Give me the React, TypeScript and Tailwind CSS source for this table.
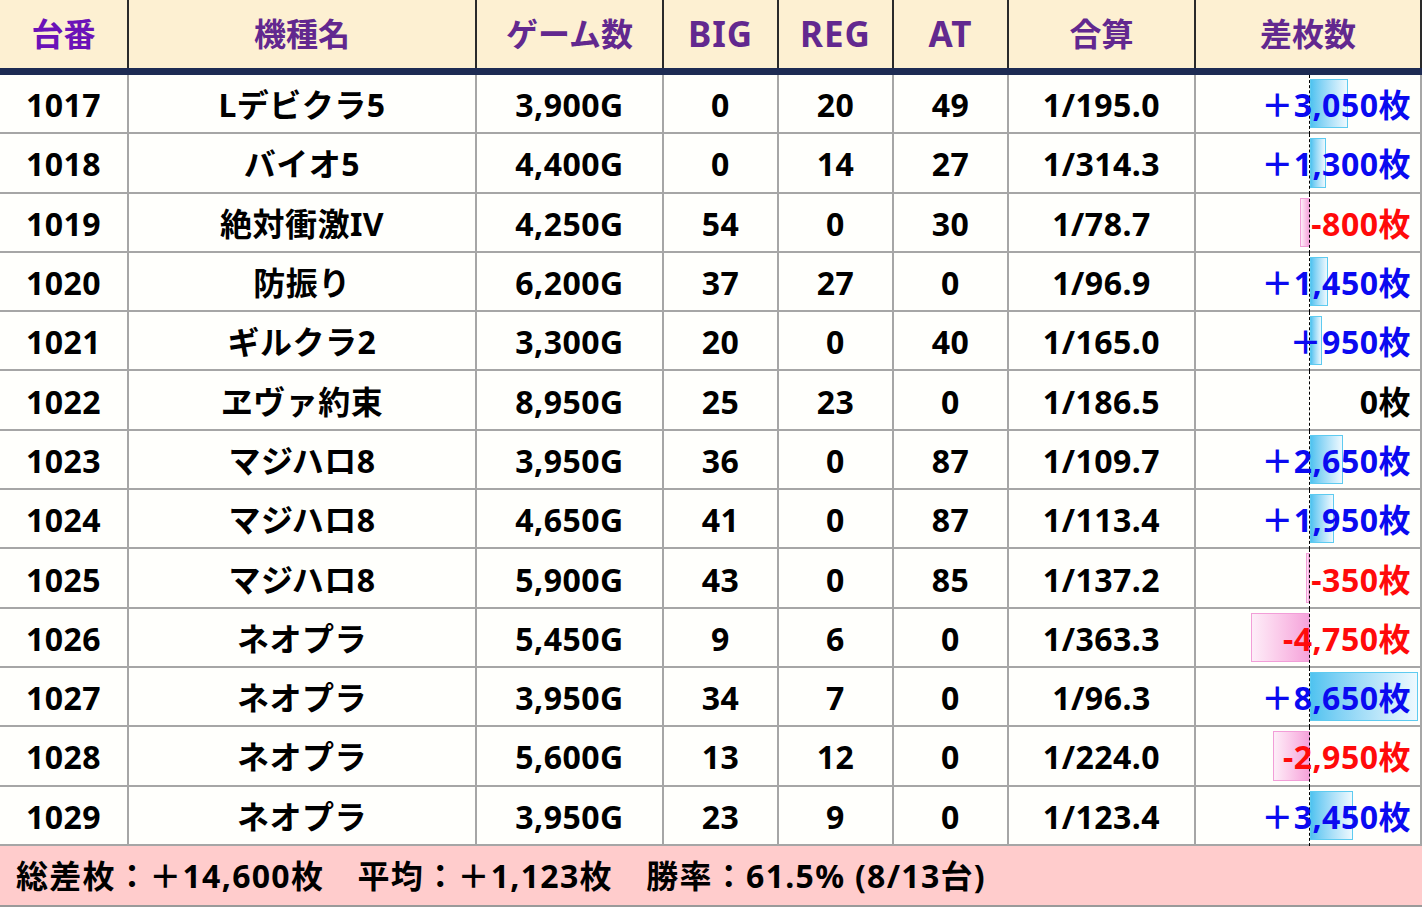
import React from "react";

type Row = [string, string, string, number, number, number, string, number];

const rows: Row[] = [
  ["1017", "Lデビクラ5", "3,900G", 0, 20, 49, "1/195.0", 3050],
  ["1018", "バイオ5", "4,400G", 0, 14, 27, "1/314.3", 1300],
  ["1019", "絶対衝激IV", "4,250G", 54, 0, 30, "1/78.7", -800],
  ["1020", "防振り", "6,200G", 37, 27, 0, "1/96.9", 1450],
  ["1021", "ギルクラ2", "3,300G", 20, 0, 40, "1/165.0", 950],
  ["1022", "ヱヴァ約束", "8,950G", 25, 23, 0, "1/186.5", 0],
  ["1023", "マジハロ8", "3,950G", 36, 0, 87, "1/109.7", 2650],
  ["1024", "マジハロ8", "4,650G", 41, 0, 87, "1/113.4", 1950],
  ["1025", "マジハロ8", "5,900G", 43, 0, 85, "1/137.2", -350],
  ["1026", "ネオプラ", "5,450G", 9, 6, 0, "1/363.3", -4750],
  ["1027", "ネオプラ", "3,950G", 34, 7, 0, "1/96.3", 8650],
  ["1028", "ネオプラ", "5,600G", 13, 12, 0, "1/224.0", -2950],
  ["1029", "ネオプラ", "3,950G", 23, 9, 0, "1/123.4", 3450],
];

const headers = ["台番", "機種名", "ゲーム数", "BIG", "REG", "AT", "合算", "差枚数"];
const maxAbs = 8650;

const cols = "grid grid-cols-[129px_348px_187px_115px_115px_115px_187px_226px]";

const formatDiff = (v: number) => {
  if (v > 0) return "＋" + v.toLocaleString("en-US") + "枚";
  if (v < 0) return "-" + Math.abs(v).toLocaleString("en-US") + "枚";
  return "0枚";
};

const DiffCell = ({ value }: { value: number }) => {
  const w = (Math.abs(value) / maxAbs) * 108;
  return (
    <div className="relative flex items-center justify-end pr-[9px] pt-[3px] border-r-2 border-b-2 border-[#a6a6a6]">
      {value > 0 && (
        <div
          className="absolute left-[114px] top-[4px] bottom-[4px] border border-[#5ecbf0] bg-linear-to-r from-[#4fc3f0] to-[#eef9fe]"
          style={{ width: w }}
        />
      )}
      {value < 0 && (
        <div
          className="absolute top-[4px] bottom-[4px] border border-[#f29ed8] bg-linear-to-r from-[#fdeef8] to-[#f5a2da]"
          style={{ width: w, left: 114 - w }}
        />
      )}
      <div className="absolute left-[113px] top-0 bottom-[-2px] border-l border-dashed border-black" />
      <span
        className={
          "relative tracking-[0.5px] " +
          (value > 0 ? "text-[#0a0af0]" : value < 0 ? "text-[#ff0a0a]" : "text-black")
        }
      >
        {formatDiff(value)}
      </span>
    </div>
  );
};

export default function App() {
  return (
    <div className="w-[1422px] h-[907px] overflow-hidden bg-white font-['Noto_Sans','Noto_Sans_CJK_JP',sans-serif] font-bold">
      <div className={cols + " h-[75px] bg-[#fdf0d2] border-b-[7px] border-[#1d2b53]"}>
        {headers.map((h, i) => (
          <div
            key={h}
            className={
              "flex items-center justify-center text-[32px] border-r-2 border-[#2a2a2a] " +
              (i === 0 ? "text-[#6b12b8]" : "text-[#62288f]") +
              (i >= 3 && i <= 5 ? " text-[35px] tracking-[1px]" : "")
            }
          >
            {h}
          </div>
        ))}
      </div>

      {rows.map((r) => (
        <div key={r[0]} className={cols + " h-[59.3px] bg-[#fffffc] text-[32px] text-black"}>
          {[r[0], r[1], r[2], r[3], r[4], r[5], r[6]].map((c, i) => (
            <div
              key={i}
              className="flex items-center justify-center pt-[3px] tracking-[0.5px] border-r-2 border-b-2 border-[#a6a6a6]"
            >
              {c}
            </div>
          ))}
          <DiffCell value={r[7]} />
        </div>
      ))}

      <div className="h-[61px] bg-[#ffcccc] border-b-2 border-[#9a9a9a] flex items-center pl-[16px] pt-[2px] text-[32px] tracking-[1.3px] text-black">
        総差枚：＋14,600枚　平均：＋1,123枚　勝率：61.5% (8/13台)
      </div>
    </div>
  );
}
